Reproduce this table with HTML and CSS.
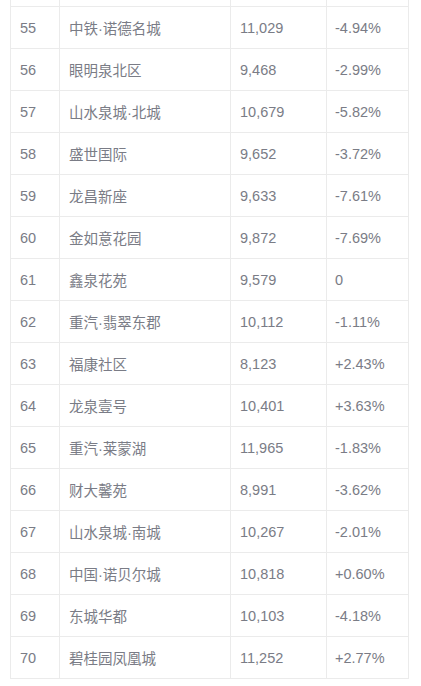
FILE: index.html
```html
<!DOCTYPE html>
<html lang="zh-CN">
<head>
  <meta charset="UTF-8">
  <title>小区房价排行</title>
  <link rel="stylesheet" href="styles.css">
</head>
<body>
  <div class="table-wrap">
    <table class="price-table">
      <colgroup>
        <col class="col-rank">
        <col class="col-name">
        <col class="col-price">
        <col class="col-change">
      </colgroup>
      <tbody id="priceBody">
        <tr class="cut-row"><td></td><td></td><td></td><td></td></tr>
      </tbody>
    </table>
  </div>

  <script>
    var rows = [
      [55, "中铁·诺德名城", "11,029", "-4.94%"],
      [56, "眼明泉北区", "9,468", "-2.99%"],
      [57, "山水泉城·北城", "10,679", "-5.82%"],
      [58, "盛世国际", "9,652", "-3.72%"],
      [59, "龙昌新座", "9,633", "-7.61%"],
      [60, "金如意花园", "9,872", "-7.69%"],
      [61, "鑫泉花苑", "9,579", "0"],
      [62, "重汽·翡翠东郡", "10,112", "-1.11%"],
      [63, "福康社区", "8,123", "+2.43%"],
      [64, "龙泉壹号", "10,401", "+3.63%"],
      [65, "重汽·莱蒙湖", "11,965", "-1.83%"],
      [66, "财大馨苑", "8,991", "-3.62%"],
      [67, "山水泉城·南城", "10,267", "-2.01%"],
      [68, "中国·诺贝尔城", "10,818", "+0.60%"],
      [69, "东城华都", "10,103", "-4.18%"],
      [70, "碧桂园凤凰城", "11,252", "+2.77%"]
    ];

    var tbody = document.getElementById("priceBody");
    rows.forEach(r => {
      var tr = document.createElement("tr");
      tr.innerHTML = `
        <td>${r[0]}</td>
        <td>${r[1]}</td>
        <td>${r[2]}</td>
        <td>${r[3]}</td>
      `;
      tbody.appendChild(tr);
    });
  </script>
</body>
</html>
```

FILE: styles.css
```css
body {
  margin: 0;
  background: white;
  font-family: "Liberation Sans", "Noto Sans CJK SC", sans-serif;
  font-size: 14.5px;
  color: #7a7c86;
}
.table-wrap {
  padding-left: 10px;
}
.price-table {
  margin-top: -36px;
  border-collapse: collapse;
  table-layout: fixed;
  width: 399px;
}
.col-rank {
  width: 49px;
}
.col-name {
  width: 171px;
}
.col-price {
  width: 96px;
}
.col-change {
  width: 82px;
}
.price-table tr {
  height: 42px;
}
.price-table td {
  border: 1px solid #ebebeb;
  padding: 0 9px;
  text-align: left;
  white-space: nowrap;
}
.price-table td:last-child {
  padding-left: 8px;
}
```
